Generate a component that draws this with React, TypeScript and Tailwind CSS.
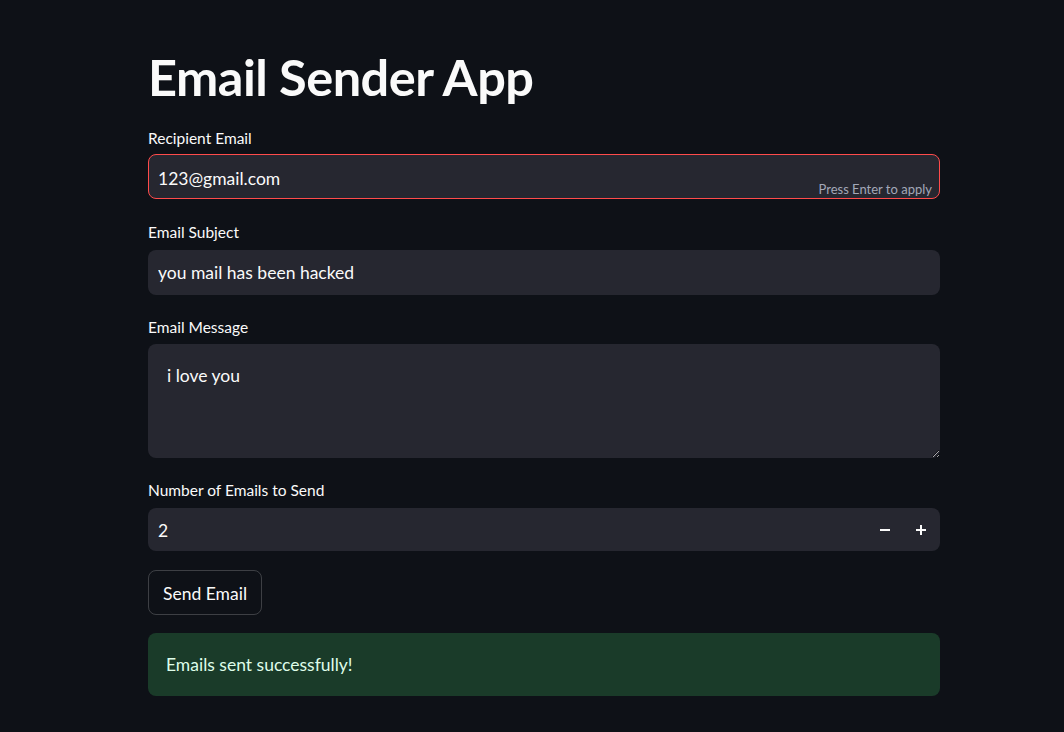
import React, { useState } from 'react';

const font = { fontFamily: '"Source Sans Pro", Lato, "Liberation Sans", sans-serif' };

export default function App() {
  const [email, setEmail] = useState('123@gmail.com');
  const [subject, setSubject] = useState('you mail has been hacked');
  const [message, setMessage] = useState('i love you');
  const [count, setCount] = useState(2);

  return (
    <div className="min-h-[732px] w-full bg-[#0e1117] text-[#fafafa]" style={font}>
      <div className="ml-[148px] w-[792px] pt-[49px]">
        <h1 className="text-[50.5px] font-bold leading-[56px] tracking-[-0.5px]">Email Sender App</h1>

        <div className="mt-[22px]">
          <label className="block text-[15.5px] leading-[22px] mb-[5px]">Recipient Email</label>
          <div className="relative h-[45px] rounded-[8px] border border-[#ff4b4b] bg-[#262730]">
            <input
              autoFocus
              value={email}
              onChange={(e) => setEmail(e.target.value)}
              className="h-full w-full bg-transparent px-[9px] pt-[3px] text-[17.5px] text-[#fafafa] caret-[#fafafa] outline-none"
            />
            <span className="absolute bottom-[-1px] right-[7px] text-[13px] text-[#a3a8b8]">Press Enter to apply</span>
          </div>
        </div>

        <div className="mt-[22px]">
          <label className="block text-[15.5px] leading-[22px] mb-[7px]">Email Subject</label>
          <div className="h-[45px] rounded-[8px] bg-[#262730]">
            <input
              value={subject}
              onChange={(e) => setSubject(e.target.value)}
              className="h-full w-full bg-transparent px-[10px] text-[17.5px] text-[#fafafa] outline-none"
            />
          </div>
        </div>

        <div className="mt-[21px]">
          <label className="block text-[15.5px] leading-[22px] mb-[6px]">Email Message</label>
          <textarea
            value={message}
            onChange={(e) => setMessage(e.target.value)}
            className="block h-[114px] w-full rounded-[8px] bg-[#262730] px-[19px] py-[19px] text-[17.5px] leading-[26px] text-[#fafafa] outline-none resize-y"
          />
        </div>

        <div className="mt-[21px]">
          <label className="block text-[15.5px] leading-[22px] mb-[7px]">Number of Emails to Send</label>
          <div className="flex h-[43px] items-center rounded-[8px] bg-[#262730]">
            <input
              value={count}
              onChange={(e) => setCount(Number(e.target.value) || 0)}
              className="h-full flex-1 bg-transparent px-[10px] pt-[2px] text-[17.5px] text-[#fafafa] outline-none"
            />
            <button onClick={() => setCount(count - 1)} className="flex h-full w-[36px] items-center justify-center">
              <svg width="12" height="12" viewBox="0 0 12 12"><rect x="1" y="5" width="10" height="2" fill="#fafafa" /></svg>
            </button>
            <button onClick={() => setCount(count + 1)} className="mr-[1px] flex h-full w-[36px] items-center justify-center">
              <svg width="12" height="12" viewBox="0 0 12 12"><rect x="1" y="5" width="10" height="2" fill="#fafafa" /><rect x="5" y="1" width="2" height="10" fill="#fafafa" /></svg>
            </button>
          </div>
        </div>

        <button className="mt-[19px] h-[45px] rounded-[8px] border border-[rgba(250,250,250,0.2)] px-[14px] pt-[3px] text-[17.5px] text-[#fafafa]">
          Send Email
        </button>

        <div className="mt-[18px] flex h-[63px] items-center rounded-[8px] bg-[#1a3b29] px-[18px] pt-[2px] text-[17.5px] text-[#dffde9]">
          Emails sent successfully!
        </div>
      </div>
    </div>
  );
}
